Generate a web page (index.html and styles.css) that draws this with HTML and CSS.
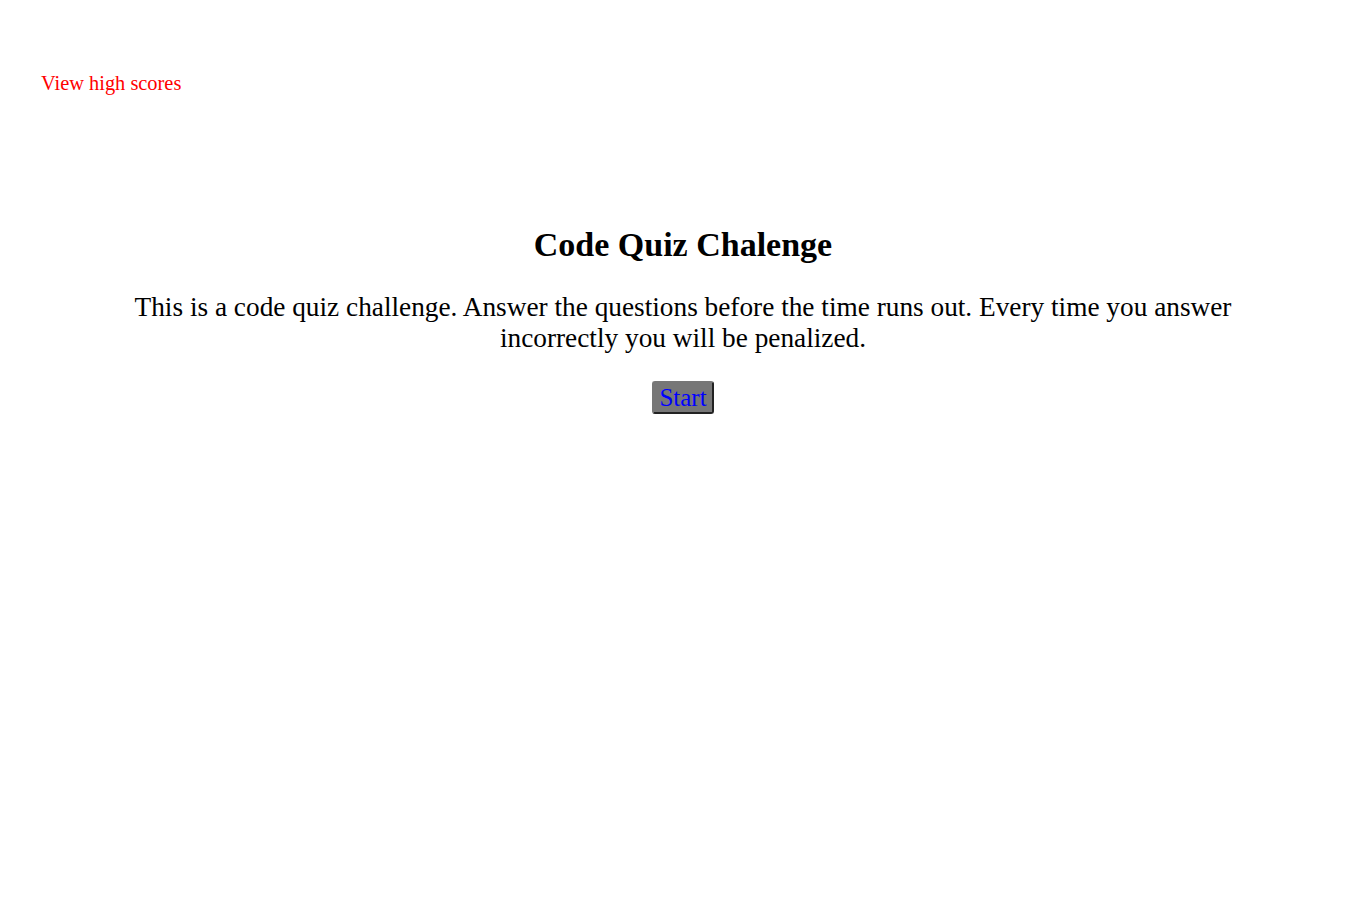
FILE: index.html
```html
<!DOCTYPE html>
<html>
<head>
<meta charset="utf-8">
<title>Code Quiz</title>
<link rel="stylesheet" href="styles.css">
</head>
<body>
<header class="top">
  <a class="scores">View high scores</a>
</header>
<main class="intro">
  <h1 class="title">Code Quiz Chalenge</h1>
  <p class="lead">This is a code quiz challenge. Answer the questions before the time runs out. Every time you answer incorrectly you will be penalized.</p>
  <button class="start">Start</button>
</main>
</body>
</html>
```
FILE: styles.css
```css
body {
  margin: 0;
  font-family: "Liberation Serif", "Times New Roman", serif;
  color: #000;
  background: #fff;
}
.top {
  padding: 72px 41px 0;
  font-size: 20.4px;
  line-height: 23px;
}
.scores {
  color: #ff0000;
}
.intro {
  padding: 130px 120px 0;
  text-align: center;
}
.title {
  font-size: 34px;
  line-height: 39px;
  margin: 0 0 28px;
}
.lead {
  font-size: 27.3px;
  line-height: 31px;
  margin: 0 0 27px;
}
.start {
  font-family: "Liberation Serif", "Times New Roman", serif;
  font-size: 25px;
  line-height: 29px;
  color: #0000ff;
  background: #777777;
  border: 2px outset #777;
  border-radius: 3px;
  padding: 0 5px;
}
```
